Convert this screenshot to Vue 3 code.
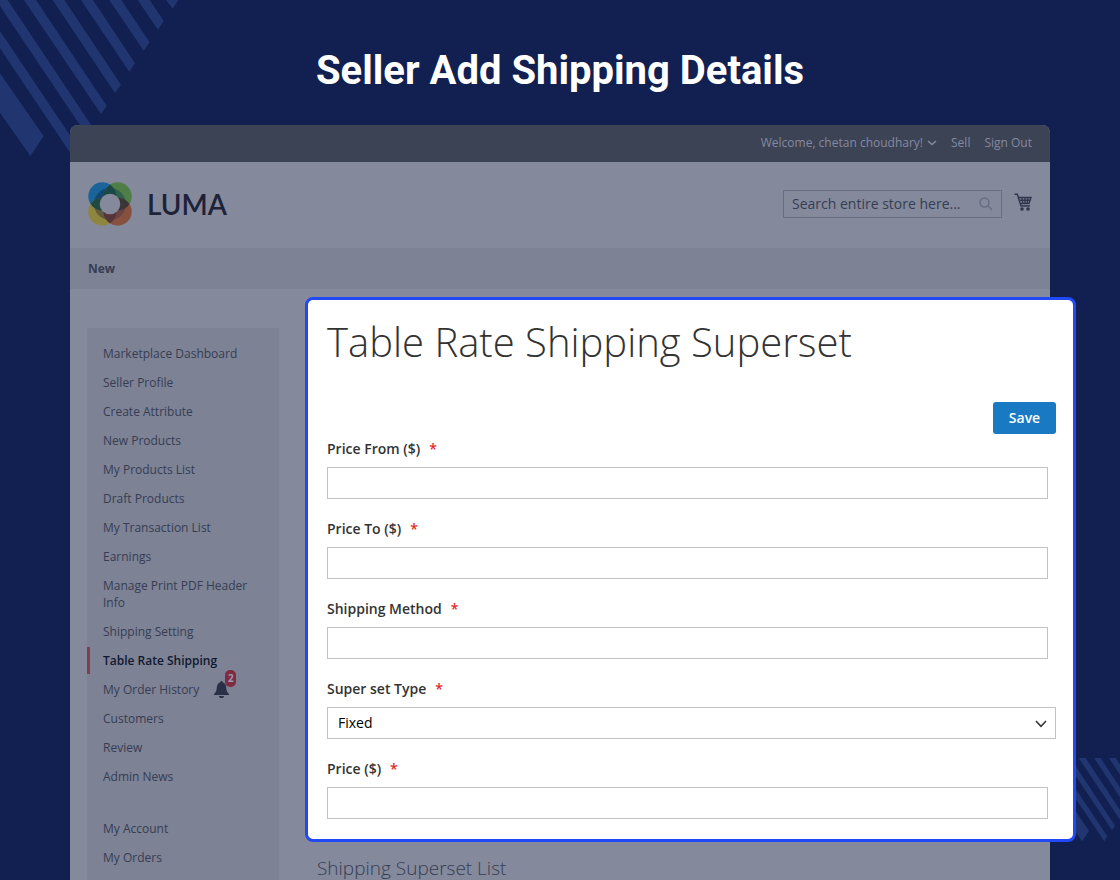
<script setup>
import { ref } from 'vue'

const mainLinks = [
  'Marketplace Dashboard',
  'Seller Profile',
  'Create Attribute',
  'New Products',
  'My Products List',
  'Draft Products',
  'My Transaction List',
  'Earnings',
  'Manage Print PDF Header Info',
  'Shipping Setting',
  'Table Rate Shipping',
  'My Order History',
  'Customers',
  'Review',
  'Admin News',
]
const accountLinks = ['My Account', 'My Orders']

const fields = [
  { id: 'price-from', label: 'Price From ($)' },
  { id: 'price-to', label: 'Price To ($)' },
  { id: 'shipping-method', label: 'Shipping Method' },
  { id: 'superset-type', label: 'Super set Type', options: ['Fixed', 'Percent'] },
  { id: 'price', label: 'Price ($)' },
]
const values = ref({
  'price-from': '',
  'price-to': '',
  'shipping-method': '',
  'superset-type': 'Fixed',
  price: '',
})
</script>

<template>
  <div class="page">
    <svg class="stripes-top" viewBox="0 0 540 470" aria-hidden="true">
      <path d="M0 220 131 409 91 468 0 338zM0 93 235 443 217 468 0 145zM0 0H23L277 380 260 405 0 18zM72 0H108L320 317 303 342zM158 0H193L363 254 345 279zM243 0H279L405 190 388 215zM328 0H364L449 127 431 152zM413 0H449L491 63 474 89zM498 0H535L518 26z" />
    </svg>
    <svg class="stripes-bottom" viewBox="348 234 132 249" aria-hidden="true">
      <path d="M300 323 387 453 366 484 300 386zM265 234H286L442 469 433 484zM311 234H331L465 437 456 451zM356 234H377L488 402 479 418zM402 234H422L511 370 502 385zM447 234H467L534 337 525 352z" />
    </svg>

    <h1 class="title">Seller Add Shipping Details</h1>

    <div class="store">
      <div class="topbar">
        <button class="welcome" type="button">
          Welcome, chetan choudhary!
          <svg width="10" height="6" viewBox="0 0 10 6" aria-hidden="true"><path d="M1 1 5 4.600 9 1" /></svg>
        </button>
        <a href="#">Sell</a>
        <a href="#">Sign Out</a>
      </div>

      <header class="header">
        <a class="logo" href="#">
          <svg width="44" height="44" viewBox="0 0 44 44" aria-hidden="true">
            <defs>
              <clipPath id="c-blue"><circle cx="14.300" cy="14.300" r="14" /></clipPath>
              <clipPath id="c-yellow"><circle cx="14.300" cy="29.700" r="14" /></clipPath>
              <clipPath id="c-green"><circle cx="29.700" cy="14.300" r="14" /></clipPath>
              <clipPath id="c-orange"><circle cx="29.700" cy="29.700" r="14" /></clipPath>
            </defs>
            <circle cx="14.300" cy="14.300" r="14" fill="#1b6499" />
            <circle cx="29.700" cy="14.300" r="14" fill="#4f7f46" />
            <circle cx="14.300" cy="29.700" r="14" fill="#8f853f" />
            <circle cx="29.700" cy="29.700" r="14" fill="#87503f" />
            <circle cx="22" cy="22" r="16" fill="#14476f" clip-path="url(#c-blue)" />
            <circle cx="22" cy="22" r="16" fill="#31604f" clip-path="url(#c-green)" />
            <circle cx="22" cy="22" r="16" fill="#5f5a40" clip-path="url(#c-yellow)" />
            <circle cx="22" cy="22" r="16" fill="#6a4343" clip-path="url(#c-orange)" />
            <circle cx="29.700" cy="14.300" r="14" fill="#1b4844" clip-path="url(#c-blue)" />
            <circle cx="14.300" cy="29.700" r="14" fill="#20493f" clip-path="url(#c-blue)" />
            <circle cx="29.700" cy="29.700" r="14" fill="#3b3536" clip-path="url(#c-green)" />
            <circle cx="29.700" cy="29.700" r="14" fill="#55343a" clip-path="url(#c-yellow)" />
            <circle cx="22" cy="22" r="10.300" fill="#84899c" />
          </svg>
          <span>LUMA</span>
        </a>
        <div class="search">
          <input type="search" aria-label="Search" placeholder="Search entire store here..." />
          <button type="button" aria-label="Search">
            <svg width="14" height="14" viewBox="0 0 14 14"><circle cx="5.500" cy="5.500" r="4.500" /><path d="M8.800 8.800 13 13" /></svg>
          </button>
        </div>
        <a class="cart" href="#" aria-label="Cart">
          <svg width="18" height="18" viewBox="0 0 18 18">
            <path class="line" d="M.5 1.300H3.300L7 13H16M4.200 4.500H17L15 10.500H6.200M5 7.300H16M8 4.500 8.800 10.500M11 4.500V10.500M14 4.500 13.200 10.500" />
            <circle cx="8" cy="16" r="1.800" /><circle cx="14" cy="16" r="1.800" />
          </svg>
        </a>
      </header>

      <nav class="nav"><a href="#">New</a></nav>

      <div class="body">
        <aside class="sidebar">
          <ul>
            <li v-for="link in mainLinks" :key="link" :class="{ current: link === 'Table Rate Shipping' }">
              <a href="#">{{ link }}</a>
              <span v-if="link === 'My Order History'" class="bell">
                <svg width="15" height="17" viewBox="0 0 15 17" aria-hidden="true">
                  <path d="M7.500 0C6.800 0 6.400.5 6.400 1.300 4 2 3 4 2.800 6.500 2.600 10 1.800 11.500 0 13V14H15V13C13.200 11.500 12.400 10 12.200 6.500 12 4 11 2 8.600 1.300 8.600.5 8.200 0 7.500 0zM5 15A2.500 2.200 0 0 0 10 15z" />
                </svg>
                <b>2</b>
              </span>
            </li>
          </ul>
          <ul>
            <li v-for="link in accountLinks" :key="link"><a href="#">{{ link }}</a></li>
          </ul>
        </aside>
        <main class="list">
          <h3>Shipping Superset List</h3>
        </main>
      </div>

      <form class="card" @submit.prevent>
        <h2>Table Rate Shipping Superset</h2>
        <div class="actions"><button type="submit">Save</button></div>
        <div v-for="field in fields" :key="field.id" class="field">
          <label :for="field.id">{{ field.label }}<span>*</span></label>
          <div v-if="field.options" class="select">
            <select :id="field.id" v-model="values[field.id]">
              <option v-for="option in field.options" :key="option">{{ option }}</option>
            </select>
            <svg width="12" height="8" viewBox="0 0 12 8" aria-hidden="true"><path d="M1 1 6 6.300 11 1" /></svg>
          </div>
          <input v-else :id="field.id" v-model="values[field.id]" type="text" />
        </div>
      </form>
    </div>
  </div>
</template>

<style>
body {
  margin: 0;
}
</style>

<style scoped>
* {
  box-sizing: border-box;
}
.page {
  position: relative;
  display: flex;
  flex-direction: column;
  height: 100vh;
  min-height: 860px;
  overflow: hidden;
  background: #112050;
  font-family: "Open Sans", "Noto Sans", sans-serif;
  color: #363d53;
}
.stripes-top,
.stripes-bottom {
  position: absolute;
  fill: #213670;
}
.stripes-top {
  top: 0;
  left: 0;
  width: 180px;
}
.stripes-bottom {
  top: 758px;
  right: 0;
  width: 44px;
}
.title {
  position: relative;
  margin: 0;
  padding: 47px 0 30px;
  font: 700 40px/48px Roboto, sans-serif;
  text-align: center;
  color: #fff;
}
.store {
  position: relative;
  flex: 1;
  display: flex;
  flex-direction: column;
  margin: 0 70px;
  border-radius: 8px 8px 0 0;
  background: #84899c;
}
a {
  color: inherit;
  text-decoration: none;
}
button {
  border: 0;
  padding: 0;
  background: none;
  color: inherit;
  font: inherit;
}
.topbar {
  display: flex;
  justify-content: flex-end;
  align-items: center;
  gap: 14px;
  height: 37px;
  padding: 0 18px 2px;
  border-radius: 8px 8px 0 0;
  background: #3c4355;
  color: #8489a0;
  font-size: 12px;
}
.welcome {
  display: flex;
  align-items: center;
  gap: 4px;
}
.welcome svg,
.search svg,
.select svg {
  fill: none;
  stroke: currentColor;
  stroke-width: 1.500;
}
.header {
  display: flex;
  align-items: center;
  height: 86px;
  padding: 0 18px 3px;
}
.logo {
  display: flex;
  align-items: center;
  gap: 15px;
  margin-right: auto;
  color: #1d2238;
  font: 600 28px/32px Lato, sans-serif;
}
.search {
  display: flex;
  align-items: center;
  width: 219px;
  height: 28px;
  border: 1px solid #676e84;
}
.search input {
  flex: 1;
  min-width: 0;
  height: 26px;
  padding: 0 0 1px 8px;
  border: 0;
  background: none;
  color: inherit;
  font: 14px "Open Sans", sans-serif;
}
.search input::placeholder {
  color: #363d53;
}
.search button {
  display: flex;
  padding-right: 8px;
  color: #676e84;
}
.cart {
  display: flex;
  margin-left: 12px;
  padding-bottom: 3px;
  fill: #30364b;
}
.cart .line {
  fill: none;
  stroke: #30364b;
  stroke-width: 1.400;
}
.nav {
  padding: 0 18px;
  background: #7d8295;
  font-size: 12px;
  font-weight: 700;
  line-height: 41px;
}
.body {
  display: flex;
  flex: 1;
  padding-left: 17px;
}
.sidebar {
  width: 192px;
  margin-top: 39px;
  padding-top: 11px;
  background: #7d8295;
  font-size: 12px;
  line-height: 17px;
}
.sidebar ul {
  margin: 0 0 23px;
  padding: 0;
  list-style: none;
}
.sidebar li {
  display: flex;
  align-items: center;
  padding: 6px 16px;
}
.sidebar .current {
  margin: 1px 0;
  padding: 5px 13px;
  border-left: 3px solid #853c4c;
  color: #11182f;
  font-weight: 600;
}
.bell {
  position: relative;
  display: flex;
  margin-left: 15px;
  fill: #293047;
}
.bell b {
  position: absolute;
  top: -11px;
  left: 11px;
  width: 11px;
  border-radius: 5px;
  background: #812b40;
  color: #989cb0;
  font-size: 10px;
  text-align: center;
}
.list {
  flex: 1;
  padding: 568px 0 0 38px;
}
.list h3 {
  margin: 0;
  font-size: 19px;
  font-weight: 300;
  line-height: 22px;
}
.card {
  position: absolute;
  top: 172px;
  left: 235px;
  right: -26px;
  padding: 12px 17px 20px 19px;
  border: 3px solid #2149f5;
  border-radius: 8px;
  background: #fff;
  color: #333;
  font-size: 14px;
}
.card h2 {
  margin: 0 0 30px;
  font-size: 40px;
  font-weight: 300;
  line-height: 60px;
}
.actions {
  display: flex;
  justify-content: flex-end;
}
.actions button {
  width: 63px;
  height: 32px;
  padding-bottom: 2px;
  border-radius: 3px;
  background: #1979c3;
  color: #fff;
  font-weight: 600;
}
.field {
  display: flex;
  flex-direction: column;
  margin-bottom: 15px;
}
.field:last-child {
  margin-bottom: 0;
}
.field label {
  padding: 5px 0 8px;
  font-weight: 600;
  line-height: 20px;
}
.field label span {
  margin-left: 9px;
  color: #e02b27;
}
.field input,
.select select {
  height: 32px;
  border: 1px solid #c2c2c2;
  border-radius: 0;
  background: #fff;
  color: #000;
  font: inherit;
}
.field input {
  margin-right: 8px;
  padding: 0 10px;
}
.select {
  display: grid;
  align-items: center;
}
.select select {
  grid-area: 1 / 1;
  padding: 0 10px 2px;
  appearance: none;
}
.select svg {
  grid-area: 1 / 1;
  justify-self: end;
  margin: 2px 9px 0 0;
  pointer-events: none;
}
</style>
